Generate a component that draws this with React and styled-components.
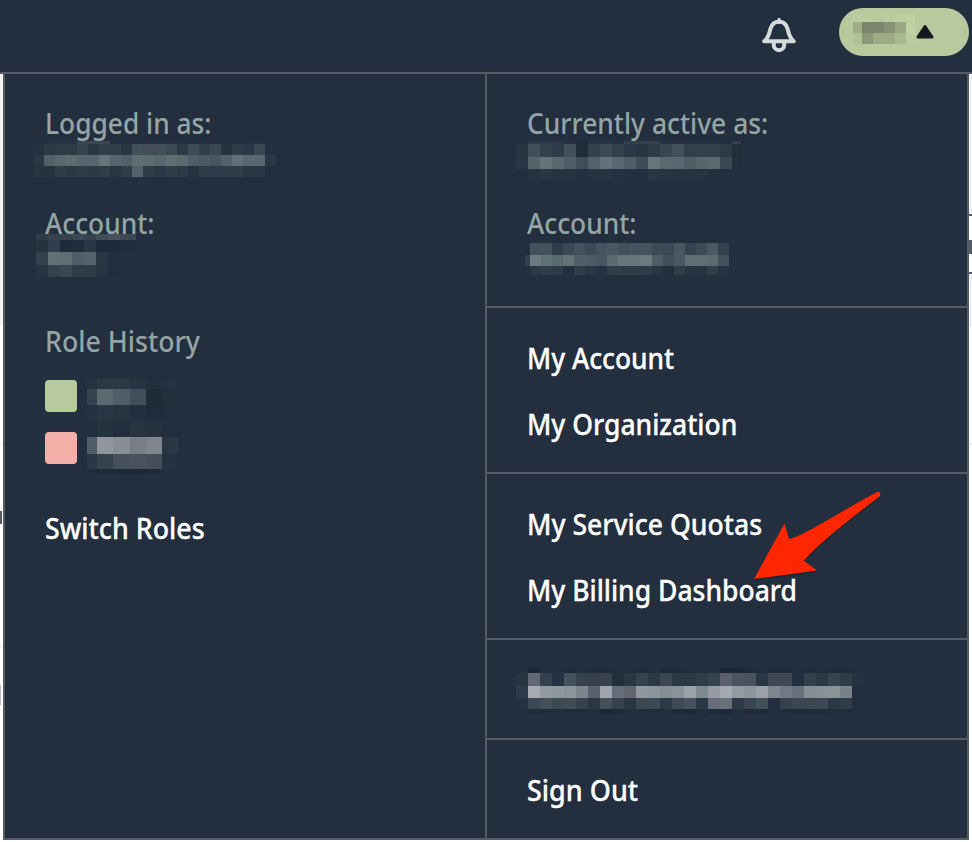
import React from "react";
import styled, { createGlobalStyle } from "styled-components";

const navy = "#232f3e";
const line = "#545b64";

const GlobalStyle = createGlobalStyle`
  * { box-sizing: border-box; }
  body { margin: 0; background: #fff; font-family: "Noto Sans", "Open Sans", sans-serif; }
`;

const Page = styled.div`
  width: 972px;
  height: 842px;
  overflow: hidden;
  display: flex;
  flex-direction: column;
  background: #fff;
`;

const Header = styled.header`
  flex: 0 0 74px;
  display: flex;
  justify-content: flex-end;
  align-items: flex-start;
  padding: 8px 3px 0 0;
  background: ${navy};
  border-bottom: 2px solid ${line};
`;

const BellIcon = styled.svg`
  width: 36px;
  height: 36px;
  margin: 9px 42.5px 0 0;
`;

const UserButton = styled.button`
  width: 130px;
  height: 48px;
  border: 0;
  border-radius: 24px;
  padding: 6px 0 0 14px;
  display: flex;
  align-items: flex-start;
  background: #b7ca9d;
`;

const Caret = styled.svg`
  width: 18px;
  height: 15px;
  margin: 10px 0 0 1px;
`;

const Body = styled.div`
  flex: 1;
  display: grid;
  grid-template-columns: 3px 966px 3px;
`;

const Edge = styled.div`
  display: flex;
  flex-direction: column;
`;

const Strip = styled.div`
  flex: 0 0 ${(p) => p.$h}px;
  width: ${(p) => p.$w || 3}px;
  background: ${(p) => p.$c};
`;

const Menu = styled.main`
  height: 766px;
  display: grid;
  grid-template-columns: 480px 1fr;
  background: ${navy};
  border: 2px solid ${line};
  border-top: 0;
`;

const Column = styled.section`
  display: flex;
  flex-direction: column;
  padding: 29px 0 0 39.5px;
`;

const RightColumn = styled.section`
  display: grid;
  grid-template-rows: 234px 166px 166px 100px 98px;
  border-left: 2px solid ${line};
`;

const Group = styled.div`
  padding: 29px 0 0 39.5px;
  border-bottom: ${(p) => (p.$last ? 0 : 2)}px solid ${line};
`;

const LinkGroup = styled(Group)`
  padding-top: 30px;
`;

const Text = styled.div`
  height: 40px;
  margin-top: ${(p) => p.$gap || 0}px;
  font-size: 28px;
  line-height: 40px;
  white-space: nowrap;
  transform: scaleX(${(p) => p.$fit || 1});
  transform-origin: 0 0;
`;

const Label = styled(Text)`
  color: #95a5a6;
  font-weight: 500;
`;

const Link = styled(Text)`
  color: #fff;
  font-weight: 500;
  -webkit-text-stroke: 0.3px #fff;
`;

const Masked = styled.div`
  display: flow-root;
  height: ${(p) => p.$h}px;
`;

const History = styled.div`
  display: grid;
  grid-template-columns: 32px 1fr;
  column-gap: 10.5px;
  margin-top: 18px;
  height: 96px;
`;

const Swatches = styled.div`
  display: grid;
  grid-template-rows: 32px 32px;
  row-gap: 20px;
  padding-top: 1px;
`;

const Swatch = styled.span`
  border-radius: 4px;
  background: ${(p) => p.$c};
`;

const Pixels = styled.div`
  position: relative;
  width: max-content;
  display: grid;
  grid-template-columns: ${(p) => p.$cols};
  grid-template-rows: ${(p) => p.$rows};
  margin: ${(p) => p.$m || 0};
`;

const Pixel = styled.i`
  background: ${(p) => p.$c};
`;

const Arrow = styled.svg`
  position: absolute;
  left: 746px;
  top: 484px;
  width: 144px;
  height: 104px;
`;

function Mosaic({ cols, rows, cells, m }) {
  return (
    <Pixels $cols={cols} $rows={rows} $m={m}>
      {cells.map((row, r) =>
        row.split(" ").map((c, i) => <Pixel key={r + "-" + i} $c={c === "-" ? "transparent" : "#" + c} />)
      )}
    </Pixels>
  );
}

const loginCells = [
  "- 263341 263341 263341 3a4754 3a4754 3a4754 232f3e 253240 232f3e 253240 253240 253240 253240 232f3e 253240 232f3e 232f3e 232f3e 253240 253240 -",
  "253140 2c3a46 2d3b47 2d3b47 36434f 2b3745 303e4a 303e4a 2a3643 434f59 424d58 444e59 3c4854 2c3946 3e4b55 323f4b 3b4751 253240 303c49 2b3845 3b4751 253140",
  "2a3643 536068 59676e 5e6c71 57646c 57646c 66757a 58656c 526067 5f6d72 5e6b71 58676e 616f75 5b696f 505d66 4b5963 485560 54606a 607076 596870 596870 2a3744",
  "263340 253240 303c49 2b3845 303d49 2c3946 303d49 283542 303d49 53616a 303c49 2a3744 303d49 2c3a46 253240 303c49 2f3c49 303d49 303d49 293643 293643 242f3e",
];

const loginAccountCells = [
  "2f3b48 36434e 36434e 3b4751 36434e 414d57 46515b 3c4852",
  "263240 323e4b 1f2a3a 212c3c 2a3643 1e2939 1f2a3a 222d3c",
  "34404c 626f75 606d73 505d66 55636a 293644 232f3e 232f3e",
  "263340 35424e 3a4651 2f3d49 2f3c49 263340 222e3d 232f3e",
];

const activeCells = [
  "- 2b3744 2b3744 2b3744 253240 202c3b 293543 293543 253240 33404c 33404c 33404c 253240 253240 253240 253240 253240 222e3d 33404c",
  "283441 42505a 33414d 2e3b48 42505a 212c3b 31404b 3d4a55 33414d 2b3946 273542 2f3c48 394650 44515b 32404b 33414c 33414c 2e3b47 222d3c",
  "293542 56636a 64747a 596870 505d67 414e59 54616a 62717a 596870 515e67 404c57 66767d 5a6970 596870 505e66 57656d 5a6970 3b4852 222d3c",
  "- 253340 293744 263340 253340 232f3e 253240 273441 243140 232f3e 232f3e 283542 273441 263340 253240 263340 232f3e - -",
];

const activeAccountCells = [
  "232f3e 44505a 44505a 303d49 3a4853 45515c 3d4955 46525d 4b5761 42505a 44545e 45535d 3d4b55 3c4853 4b5661 35434e 3d4b55 4c5863 35424e",
  "34404c 6a7a80 617178 596970 627278 505e67 4e5c65 475660 5d6a72 65757b 65757b 697a80 4f5c65 424f59 4b5762 5e6e74 5e6e74 5b6a70 45525c",
  "- 2b3845 303e4a 2c3946 232f3e 2f3c49 293644 253240 303e4a 303d49 303d49 2e3b48 283542 232f3e 303e4a 283542 263441 303e4a 263340",
];

const historyCells = [
  "253240 2c3845 2c3845 283442 232f3e 243140",
  "36424f 5b6a70 515e67 434f5a 202b3a 242f3e",
  "243140 273642 273341 232f3e 202c3b 232f3e",
  "- 253240 232f3e 273341 263240 -",
  "505b66 90969f 878e97 777e88 7e858f 2a3643",
  "2a3744 35434d 46505b 48525d 444f59 243140",
  "202d3b 1f2b3a 1d2938 1d2938 1f2b3a -",
];

const maskedLinkCells = [
  "- 1c2839 232f3e 232f3e 1f2b3a 232f3e 202c3b 202c3b 232f3e 232f3e 202c3b 232f3e 1e2a39 202c3b 232f3e 232f3e 222e3d 1a2638 1c2839 1f2b3a 232f3e 202c3b 202c3b 232f3e 202c3b 232f3e 1f2b3a 202c3b -",
  "273441 616873 33404d 263141 46525b 35424e 363f4c 36434e 242f3e 293643 35424e 2c3945 3b4852 2b3845 2b3845 303d49 35434e 5b606d 4a555f 48535d 293643 404654 404654 232f3e 33404c 2b3845 374350 303b48 253140",
  "2e3a47 a6aab1 9299a1 90989f 8c949b 7d848d 596070 a0a4ae 666d78 60656f 90979f 8d959c 858c94 8a9199 9ba1a9 7f8990 969ca5 a5a9b1 929aa2 8d959d 9da2a9 7e858f 737984 696f7b 858d95 899198 8b9298 777f89 222e3d",
  "253140 3c4853 43505a 3d4a54 404d57 36434e 2b3744 444f5a 35414d 283542 3b4852 3d4a54 2c3946 3f4b56 45515b 2a3744 676c78 6b717b 2c3946 3a4551 434f59 232f3e 35414d 3b4852 3b4651 3c4954 2a3744 303d49 -",
  "- 1f2b3a 202c3b 202c3b 202c3b 202c3b - 1c2839 1e2a39 222e3d 202c3b 202c3b 222e3d 1e2a39 1d2938 222e3d 1e2a39 1d2938 222e3d 1f2b3a 1f2b3a - 202c3b 1e2a39 1f2b3a 1f2b3a 222e3d 202c3b -",
];

const userCells = [
  "bacd9f bacd9f b7ca9d bacda0 bbcf9f bdd1a1",
  "a0ae88 7b856c 7b856c 879374 99a683 bed1a2",
  "b0c296 8a9779 9caa85 9caa85 a8b98f b9cd9f",
  "b3c699 b7ca9d b9cc9f b7ca9d b8cb9e -",
];

export default function App() {
  return (
    <Page>
      <GlobalStyle />
      <Header>
        <BellIcon viewBox="0 0 36 36" fill="none" stroke="#d5dbdb" strokeWidth="4" strokeLinejoin="round" strokeLinecap="round">
          <path d="M3.2 24.3H32.8C28 20.5 28 16.5 26.5 11.5C25.2 7.2 22.3 4.8 18 4.8S10.8 7.2 9.5 11.5C8 16.5 8 20.5 3.2 24.3Z" />
          <path d="M12.8 26V28a5.2 5.2 0 0 0 10.4 0V26" strokeLinecap="butt" />
          <path d="M18 2.2V5" strokeWidth="3" />
        </BellIcon>
        <UserButton aria-label="Account menu">
          <Mosaic cols="9px repeat(4, 11px) 9px" rows="8px 11px 11px 2px" cells={userCells} />
          <Caret viewBox="0 0 18 15">
            <path d="M9 2.5L16 13H2Z" fill="#16191f" stroke="#16191f" strokeWidth="3" strokeLinejoin="round" />
          </Caret>
        </UserButton>
      </Header>
      <Body>
        <Edge>
          <Strip $h={252} $c="#f2f3f3" />
          <Strip $h={117} $c="#fff" />
          <Strip $h={2} $c="#f2f3f3" />
          <Strip $h={66} $c="#fff" />
          <Strip $h={13} $w={2} $c="#545b64" />
          <Strip $h={121} $c="#fff" />
          <Strip $h={2} $w={1} $c="#eaeded" />
          <Strip $h={38} $c="#fff" />
          <Strip $h={20} $w={1} $c="#b9bdc1" />
        </Edge>
        <Menu>
          <Column>
            <Label $fit={0.94}>Logged in as:</Label>
            <Masked $h={60}>
              <Mosaic cols="10px repeat(20, 11.05px) 11px" rows="3px 11px 11px 11px" cells={loginCells} m="-2px 0 0 -10.5px" />
            </Masked>
            <Label $fit={0.94}>Account:</Label>
            <Masked $h={78}>
              <Mosaic cols="repeat(7, 12px) 16px" rows="6px 12px 12.5px 12px" cells={loginAccountCells} m="-9px 0 0 -8.5px" />
            </Masked>
            <Label $fit={0.955}>Role History</Label>
            <History>
              <Swatches>
                <Swatch $c="#b7ca9d" />
                <Swatch $c="#f2b0a9" />
              </Swatches>
              <Mosaic cols="10px 16px 17px 16px 16px 16px" rows="10px 16px 16px 16px 17px 15px 5px" cells={historyCells} />
            </History>
            <Link $fit={0.957} $gap={33}>Switch Roles</Link>
          </Column>
          <RightColumn>
            <Group>
              <Label $fit={0.943}>Currently active as:</Label>
              <Masked $h={60}>
                <Mosaic cols="repeat(18, 12px) 9px" rows="3px 12.5px 12px 11.5px" cells={activeCells} m="-2px 0 0 -10.5px" />
              </Masked>
              <Label $fit={0.94}>Account:</Label>
              <Mosaic cols="5px repeat(18, 11.06px)" rows="12px 11px 9px" cells={activeAccountCells} m="0 0 0 -1.5px" />
            </Group>
            <LinkGroup>
              <Link $fit={0.94}>My Account</Link>
              <Link $fit={0.947} $gap={26}>My Organization</Link>
            </LinkGroup>
            <LinkGroup>
              <Link $fit={0.95}>My Service Quotas</Link>
              <Link $fit={0.946} $gap={26}>My Billing Dashboard</Link>
            </LinkGroup>
            <Group>
              <Mosaic cols="repeat(29, 12px)" rows="5px 13px 12px 11px 5px" cells={maskedLinkCells} m="-1px 0 0 -10.5px" />
            </Group>
            <LinkGroup $last>
              <Link $fit={0.963}>Sign Out</Link>
            </LinkGroup>
          </RightColumn>
        </Menu>
        <Edge>
          <Strip $h={140} $c="#f2f3f3" />
          <Strip $h={2} $c="#545b64" />
          <Strip $h={24} $c="#fff" />
          <Strip $h={14} $c="#545b64" />
          <Strip $h={18} $c="#fff" />
          <Strip $h={2} $c="#545b64" />
          <Strip $h={50} $c="#f2f3f3" />
          <Strip $h={2} $c="#eaeded" />
          <Strip $h={117} $c="#fafafa" />
          <Strip $h={2} $c="#eaeded" />
        </Edge>
      </Body>
      <Arrow viewBox="746 484 144 104">
        <path
          d="M754 579L784.5 523.5L789 539C800 538 838 513 877 492C880 491 881.5 495 879 497C843 524 811 551 804 561L817 570.5Z"
          fill="#000"
          opacity="0.25"
          transform="translate(0 1.5)"
        />
        <path
          d="M754 579L784.5 523.5L789 539C800 538 838 513 877 492C880 491 881.5 495 879 497C843 524 811 551 804 561L817 570.5Z"
          fill="#ff2600"
        />
      </Arrow>
    </Page>
  );
}
